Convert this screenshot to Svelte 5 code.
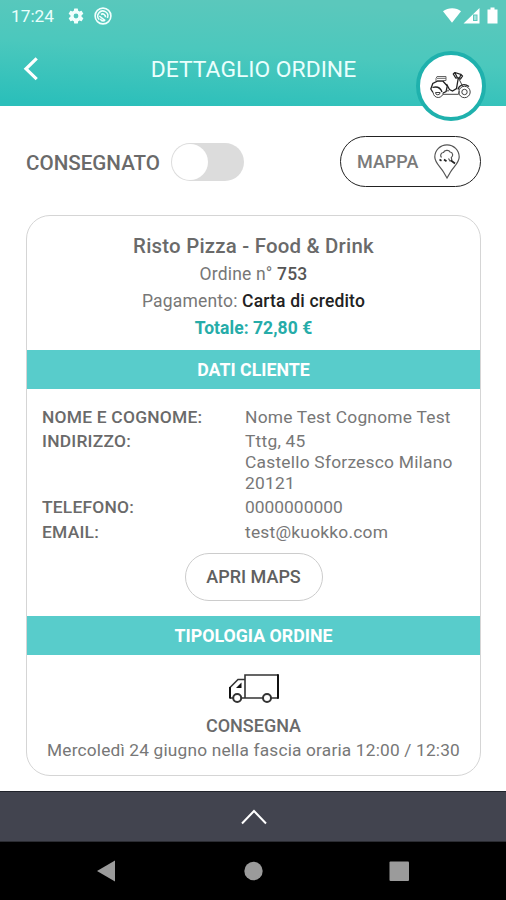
<script>
  const customer = [
    { label: 'NOME E COGNOME:', lines: ['Nome Test Cognome Test'] },
    { label: 'INDIRIZZO:', lines: ['Tttg, 45', 'Castello Sforzesco Milano', '20121'] },
    { label: 'TELEFONO:', lines: ['0000000000'], numeric: true },
    { label: 'EMAIL:', lines: ['test@kuokko.com'] }
  ];
  let delivered = $state(false);
</script>

<div class="screen">
  <header>
    <div class="status">
      <span class="time">17:24</span>
      <svg class="gear" width="18" height="18" viewBox="0 0 24 24" fill="#f2fffd"><path fill-rule="evenodd" d="M19.4 13a7.500 7.500 0 0 0 0-2l2.100-1.650a.5.5 0 0 0 .12-.64l-2-3.460a.5.5 0 0 0-.61-.22l-2.490 1a7.300 7.300 0 0 0-1.690-.98l-.38-2.650A.5.5 0 0 0 14 2h-4a.5.5 0 0 0-.49.42l-.38 2.650a7.700 7.700 0 0 0-1.690.98l-2.490-1a.5.5 0 0 0-.61.22l-2 3.460a.5.5 0 0 0 .12.64L4.600 11a7.900 7.900 0 0 0 0 2l-2.110 1.650a.5.5 0 0 0-.12.64l2 3.460c.12.22.39.3.61.22l2.490-1c.52.4 1.080.73 1.690.98l.38 2.650c.03.24.24.4.49.4h4c.25 0 .46-.18.49-.42l.38-2.650a7.700 7.700 0 0 0 1.690-.98l2.490 1c.23.09.49 0 .61-.22l2-3.460a.5.5 0 0 0-.12-.64zM12 15.200a3.200 3.200 0 1 1 0-6.400 3.200 3.200 0 0 1 0 6.400z"/></svg>
      <svg class="badge" width="18" height="18" viewBox="0 0 18 18" fill="none" stroke="#f2fffd"><circle cx="9" cy="9" r="7.900" stroke-width="1.600"/><path d="M5.300 12.600A5 5 0 1 1 13.400 11M5.300 9l6 4.700M6.300 11.800a3.500 3.500 0 0 0 4.500 1.700" stroke-width="1.500"/><path d="M7 7.500c2-1.400 4.500.2 4.600 2.800" stroke-width="1.700"/></svg>
      <span class="grow"></span>
      <svg class="signals" width="56" height="18" viewBox="0 0 56 18" fill="#fff"><path d="M0 4.200C5 .2 13.500.2 18 4.200L9 15.700z"/><path fill-rule="evenodd" d="M36.500 1v15.500H20.500zM34.500 7.500H30V14h4.500z"/><path d="M31 8.500h2.500V13H31z" fill="#a6e2dc"/><path d="M47.500 .5h4V2.500h3v14h-10V2.500h3z"/></svg>
    </div>
    <div class="bar">
      <button class="back" aria-label="Indietro"><svg width="16" height="24" viewBox="0 0 16 24" fill="none" stroke="#fff" stroke-width="3.200"><path d="M13.700 1.300 3 11.800l10.700 10.400"/></svg></button>
      <h1>DETTAGLIO ORDINE</h1>
    </div>
    <div class="rider">
      <svg width="42" height="28" viewBox="0 0 42 28" fill="none" stroke="#444" stroke-width="1">
        <path d="M3.200 20.500a5 5 0 0 0 10 0M5.500 20.500a2.300 2.300 0 0 0 4.600 0z"/>
        <circle cx="34.500" cy="20" r="5.700"/><circle cx="34.500" cy="20" r="2.700"/>
        <path d="M3 20.500 .8 17l2-5.500 5-2.500h5l4.500 5-1.200 5.500-3 1.500M2.500 15.500c5-1.500 8 .5 9.500 4.500" stroke="#222" stroke-width="1.300"/>
        <path d="M13 22.300h15.500l1-3M16 18.800h3M28.500 6l4.500 9"/>
        <path d="M16.500 12l3 5.500 3 1.500 4-2.500 1.800-10.500M28 17.500c1-4.500 6-6.500 11-3" stroke="#222" stroke-width="1.300"/>
        <path d="M6 9V6.500l1-2h9V8.500H8M7 6.300h9" stroke="#666"/>
        <path d="m23.300 2 1.500-1.500 6 2-1 3-4 .5zM25 .9l2.500 5M30.500 2l2 2-2 3-2-.5" stroke="#222" stroke-width="1.200"/>
      </svg>
    </div>
  </header>

  <main>
    <div class="actions">
      <span class="flag">CONSEGNATO</span>
      <button class="toggle" class:on={delivered} aria-label="Consegnato" onclick={() => (delivered = !delivered)}><i></i></button>
      <span class="grow"></span>
      <button class="map"><span>MAPPA</span>
        <svg width="28" height="36" viewBox="0 0 28 36" fill="none" stroke="#555" stroke-width="1.200">
          <path d="M14 34 10.500 28C7 22.500 1.800 18.500 1.800 13a12.200 12.200 0 0 1 24.400 0c0 5.500-5.200 9.500-8.700 15z"/>
          <path d="M8.500 13.500c-2-2-.2-5 2-5 .8-2.500 5.500-2.800 6.500-.5 3 .2 3.500 4 1.300 5.500l.5 2.500-1.800 1-1.500-2.500"/><path d="m6.500 15.500 2 1.200M11 15.500l2.500 1.700M18 16.500l4 3" stroke="#222" stroke-width="1.700"/>
        </svg>
      </button>
    </div>

    <section class="card">
      <div class="summary">
        <h2>Risto Pizza - Food &amp; Drink</h2>
        <p>Ordine n° <b>753</b></p>
        <p>Pagamento: <b class="dark">Carta di credito</b></p>
        <p class="total">Totale: 72,80 €</p>
      </div>
      <h3>DATI CLIENTE</h3>
      <div class="customer">
        <dl>
          {#each customer as row}
            <div class="row">
              <dt>{row.label}</dt>
              <dd class:numeric={row.numeric}>{#each row.lines as line}<span>{line}</span>{/each}</dd>
            </div>
          {/each}
        </dl>
        <button class="maps">APRI MAPS</button>
      </div>
      <h3>TIPOLOGIA ORDINE</h3>
      <div class="type">
        <svg width="52" height="32" viewBox="0 0 52 32" fill="none" stroke="#333" stroke-width="1.600">
          <path d="M17 25V2h33M42.500 25H50M35.500 25H13M17 6.500h-7L2 14.500M2 25h3" /><path d="M50 1.300V25.700M2 14v11.500" stroke="#111" stroke-width="2"/>
          <circle cx="9.200" cy="25" r="4" stroke-width="2"/><circle cx="39" cy="25" r="4" stroke-width="2"/><path d="M13.500 9.500V15H8z" fill="#111" stroke="none"/>
        </svg>
        <strong>CONSEGNA</strong>
        <p>Mercoledì 24 giugno nella fascia oraria 12:00 / 12:30</p>
      </div>
    </section>
  </main>

  <button class="drawer" aria-label="Apri"><svg width="28" height="18" viewBox="0 0 28 18" fill="none" stroke="#fff" stroke-width="2"><path d="m2 15.500 12-12.500 12 12.500"/></svg></button>
  <nav>
    <svg width="506" height="58" viewBox="0 0 506 58" fill="#9b9b9b"><path d="M97 29 115 18.500v21z"/><circle cx="253.500" cy="29" r="9.200"/><rect x="389.500" y="19.500" width="19.500" height="19.500" rx="1"/></svg>
  </nav>
</div>

<style>
  :global(body) { margin: 0; background: #fff; }
  .screen { width: 506px; height: 900px; display: flex; flex-direction: column; overflow: hidden; font-family: Roboto, sans-serif; color: #777; background: #fff; }
  button { background: none; border: 0; padding: 0; margin: 0; font: inherit; color: inherit; }
  svg { display: block; flex: none; }
  h1, h2, h3, p, dl, dd, dt { margin: 0; white-space: nowrap; }
  .grow { flex: 1; }
  header { position: relative; height: 106px; flex: none; background: linear-gradient(183deg, #5bc8bc 10%, #4bc8bd 50%, #2bbfba 96%); }
  .status { display: flex; align-items: center; height: 31px; padding: 0 7px 0 11px; }
  .time { width: 56px; padding-top: 1px; font-size: 17.300px; color: #e9fffc; }
  .gear { margin-right: 9px; }
  .bar { display: flex; align-items: center; height: 75px; }
  .back { margin-left: 23px; width: 16px; }
  h1 { flex: 1; margin-right: 38px; padding-top: 2px; text-align: center; font-size: 22.850px; line-height: 28px; font-weight: 400; color: #eafffd; }
  .rider { position: absolute; left: 416px; top: 51px; width: 62px; height: 62px; border: 4px solid #1fb1ad; border-radius: 50%; background: #fff; display: flex; align-items: center; justify-content: center; }
  main { height: 685px; padding: 30px 25px 0 26px; box-sizing: border-box; flex: none; }
  .actions { display: flex; align-items: center; height: 51px; }
  .flag { width: 145px; padding-top: 2px; font-size: 20.600px; font-weight: 500; color: #6a6a6a; white-space: nowrap; }
  .toggle { width: 73px; height: 38px; box-sizing: border-box; border-radius: 19px; background: #dcdcdc; padding: 1px; display: flex; }
  .toggle i { width: 36px; height: 36px; border-radius: 50%; background: #fff; }
  .toggle.on { justify-content: flex-end; }
  .map { width: 141px; height: 51px; box-sizing: border-box; border: 1.500px solid #222; border-radius: 26px; display: flex; align-items: center; padding-left: 16px; font-size: 18px; font-weight: 500; color: #7a7a7a; }
  .map span { width: 76px; text-align: left; }
  .card { width: 455px; height: 561px; box-sizing: border-box; margin-top: 28px; border: 1.500px solid #d5d5d5; border-radius: 24px; overflow: hidden; }
  .summary { height: 134px; padding-top: 16px; box-sizing: border-box; text-align: center; font-size: 17.500px; line-height: 27px; letter-spacing: .17px; }
  h2 { font-size: 20.400px; line-height: 29px; font-weight: 500; letter-spacing: .22px; color: #6a6a6a; }
  b { font-weight: 500; color: #555; }
  .dark { color: #222; }
  .total { font-weight: 700; letter-spacing: .05px; color: #26aca9; }
  h3 { height: 39px; line-height: 40px; background: #58cccb; color: #fff; text-align: center; font-size: 17.800px; font-weight: 700; }
  .customer { height: 227px; box-sizing: border-box; padding: 18px 15px 0; display: flex; flex-direction: column; align-items: center; }
  dl { align-self: stretch; display: flex; flex-direction: column; gap: 3.600px; font-size: 17.400px; line-height: 20.800px; letter-spacing: .22px; }
  .row { display: flex; }
  dt { width: 203px; font-weight: 500; letter-spacing: .22px; color: #6a6a6a; }
  dd span { display: block; }
  .numeric { letter-spacing: 0; }
  .maps { width: 138px; height: 48px; margin-top: 10px; flex: none; border: 1px solid #ccc; border-radius: 24px; font-size: 18px; font-weight: 500; color: #606060; white-space: nowrap; box-sizing: border-box; }
  .type { display: flex; flex-direction: column; align-items: center; padding-top: 18px; font-size: 17.300px; letter-spacing: .18px; }
  .type strong { margin-top: 9px; font-size: 18px; line-height: 24px; font-weight: 500; letter-spacing: 0; color: #6a6a6a; }
  .type p { line-height: 25px; }
  .drawer { height: 51px; flex: none; background: #42444f; border-top: 1px solid #20232b; border-bottom: 1px solid #2b2c32; box-sizing: border-box; display: flex; align-items: center; justify-content: center; }
  .drawer svg { margin-left: 1px; }
  nav { flex: 1; background: #000; }
</style>
